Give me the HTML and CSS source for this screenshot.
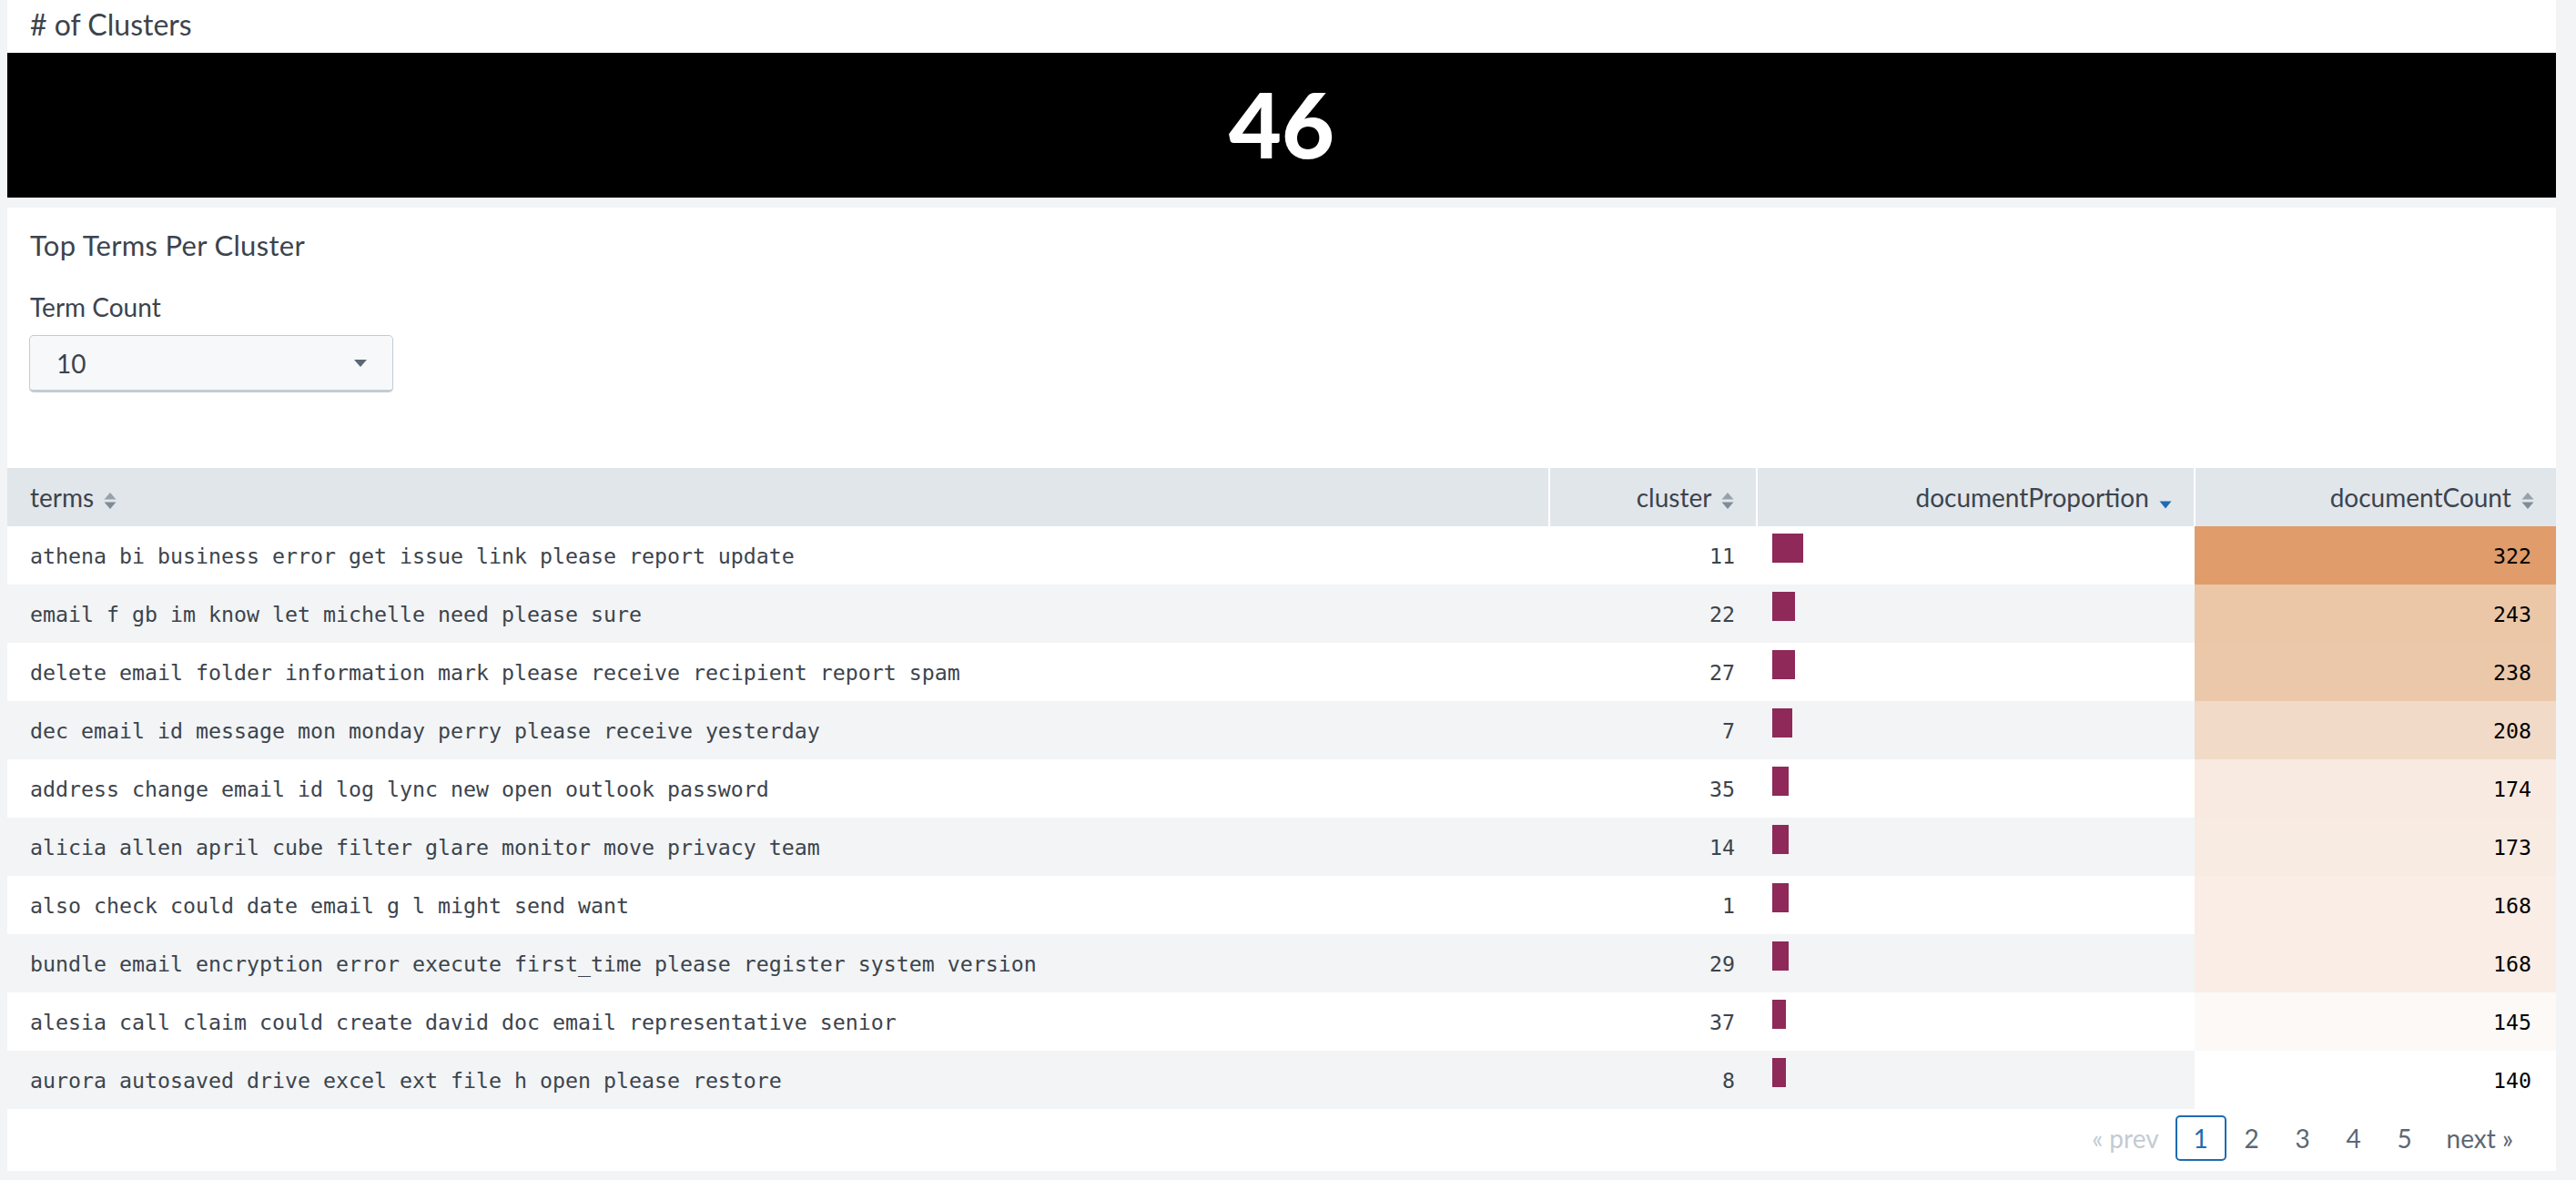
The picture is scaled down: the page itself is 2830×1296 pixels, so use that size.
FILE: index.html
```html
<!DOCTYPE html>
<html lang="en">
<head>
<meta charset="utf-8">
<title>Clusters</title>
<link rel="stylesheet" href="styles.css">
</head>
<body>
<div class="dash">
  <section class="panel">
    <h2 class="panel-title">
      # of Clusters
    </h2>
    <div class="single-value">46</div>
  </section>

  <section class="panel">
    <div class="panel-head">
      <h2 class="panel-title2">Top Terms Per Cluster</h2>
      <div class="input-label">Term Count</div>
      <div class="dropdown"><span class="dd-value">10</span><span class="caret"></span></div>
    </div>

    <table class="grid">
      <colgroup>
        <col class="c-terms"><col class="c-cluster"><col class="c-prop"><col class="c-count">
      </colgroup>
      <thead>
        <tr>
          <th class="left">terms <svg class="sort" width="14" height="18" viewBox="0 0 14 18"><path d="M7 0L13.5 7.5H0.5Z" fill="#97a1ab"/><path d="M7 18L13.5 10.5H0.5Z" fill="#818b96"/></svg></th>
          <th>cluster <svg class="sort" width="14" height="18" viewBox="0 0 14 18"><path d="M7 0L13.5 7.5H0.5Z" fill="#97a1ab"/><path d="M7 18L13.5 10.5H0.5Z" fill="#818b96"/></svg></th>
          <th>documentProportion <svg class="sort-active" width="14" height="9" viewBox="0 0 14 9"><path d="M0.5 0.5H13.5L7 8.5Z" fill="#1d6cb1"/></svg></th>
          <th>documentCount <svg class="sort" width="14" height="18" viewBox="0 0 14 18"><path d="M7 0L13.5 7.5H0.5Z" fill="#97a1ab"/><path d="M7 18L13.5 10.5H0.5Z" fill="#818b96"/></svg></th>
        </tr>
      </thead>
      <tbody>
        <tr><td class="terms">athena bi business error get issue link please report update</td><td class="num">11</td><td class="prop"><div class="bar" style="width:34px"></div></td><td class="count" style="background:#e09c6a">322</td></tr>
        <tr><td class="terms">email f gb im know let michelle need please sure</td><td class="num">22</td><td class="prop"><div class="bar" style="width:25px"></div></td><td class="count" style="background:#ebc7a8">243</td></tr>
        <tr><td class="terms">delete email folder information mark please receive recipient report spam</td><td class="num">27</td><td class="prop"><div class="bar" style="width:25px"></div></td><td class="count" style="background:#ebc8a9">238</td></tr>
        <tr><td class="terms">dec email id message mon monday perry please receive yesterday</td><td class="num">7</td><td class="prop"><div class="bar" style="width:22px"></div></td><td class="count" style="background:#f1dac7">208</td></tr>
        <tr><td class="terms">address change email id log lync new open outlook password</td><td class="num">35</td><td class="prop"><div class="bar" style="width:18px"></div></td><td class="count" style="background:#f8eae0">174</td></tr>
        <tr><td class="terms">alicia allen april cube filter glare monitor move privacy team</td><td class="num">14</td><td class="prop"><div class="bar" style="width:18px"></div></td><td class="count" style="background:#f8ebe1">173</td></tr>
        <tr><td class="terms">also check could date email g l might send want</td><td class="num">1</td><td class="prop"><div class="bar" style="width:18px"></div></td><td class="count" style="background:#f9ede5">168</td></tr>
        <tr><td class="terms">bundle email encryption error execute first_time please register system version</td><td class="num">29</td><td class="prop"><div class="bar" style="width:18px"></div></td><td class="count" style="background:#f9ede5">168</td></tr>
        <tr><td class="terms">alesia call claim could create david doc email representative senior</td><td class="num">37</td><td class="prop"><div class="bar" style="width:15px"></div></td><td class="count" style="background:#fcf9f7">145</td></tr>
        <tr><td class="terms">aurora autosaved drive excel ext file h open please restore</td><td class="num">8</td><td class="prop"><div class="bar" style="width:15px"></div></td><td class="count" style="background:#ffffff">140</td></tr>
      </tbody>
    </table>

    <nav class="pager">
      <span class="pg pg-disabled">« prev</span>
      <span class="pg pg-num pg-active">1</span>
      <span class="pg pg-num">2</span>
      <span class="pg pg-num">3</span>
      <span class="pg pg-num">4</span>
      <span class="pg pg-num">5</span>
      <span class="pg">next »</span>
    </nav>
  </section>
</div>
</body>
</html>
```

FILE: styles.css
```css
html, body {
  margin: 0;
  padding: 0;
  background: #f2f4f5;
}

body {
  font-family: Lato, "Open Sans", "Liberation Sans", sans-serif;
  color: #3c444d;
}

.dash {
  padding: 0 22px 0 8px;
  display: flex;
  flex-direction: column;
  gap: 11px;
}

.panel {
  background: #ffffff;
}

.panel-title {
  margin: 0;
  height: 58px;
  line-height: 54px;
  padding-left: 25px;
  font-size: 32px;
  font-weight: 400;
  color: #3c444d;
}

.single-value {
  height: 159px;
  background: #000000;
  color: #ffffff;
  display: flex;
  align-items: center;
  justify-content: center;
  font-size: 100px;
  font-weight: 900;
  line-height: 1;
  padding-bottom: 6px;
  box-sizing: border-box;
}

.panel-head {
  height: 286px;
  box-sizing: border-box;
  padding: 21px 25px 0;
}

.panel-title2 {
  margin: 0;
  font-size: 31px;
  font-weight: 400;
  line-height: 40px;
  letter-spacing: 0.3px;
}

.input-label {
  margin-top: 30px;
  font-size: 28px;
  line-height: 36px;
}

.dropdown {
  margin-top: 13px;
  margin-left: -1px;
  width: 400px;
  height: 63px;
  box-sizing: border-box;
  border: 1px solid #c3cbd4;
  border-bottom: 3px solid #c3cbd4;
  border-radius: 5px;
  background: #f7f8fa;
  display: flex;
  align-items: center;
  justify-content: space-between;
  padding: 0 28px 0 29px;
}

.dd-value {
  font-size: 28px;
  color: #3c444d;
}

.caret {
  width: 0;
  height: 0;
  border-left: 7px solid transparent;
  border-right: 7px solid transparent;
  border-top: 8px solid #5c6773;
}

.grid {
  width: 100%;
  border-collapse: collapse;
  table-layout: fixed;
}

.c-terms { width: 1694px; }
.c-cluster { width: 228px; }
.c-prop { width: 481px; }
.c-count { width: 397px; }

.grid th {
  height: 64px;
  padding: 0 24px;
  background: #e1e6eb;
  font-weight: 400;
  font-size: 28px;
  text-align: right;
  color: #3c444d;
  border-left: 2px solid #ffffff;
  white-space: nowrap;
}

.grid th.left {
  text-align: left;
  padding-left: 25px;
  border-left: none;
}

.sort {
  vertical-align: -2px;
  margin-left: 4px;
}

.sort-active {
  vertical-align: -2px;
  margin-left: 4px;
}

.grid td {
  height: 64px;
  padding: 0 24px;
  font-family: "DejaVu Sans Mono", "Liberation Mono", monospace;
  font-size: 23.25px;
  color: #3c444d;
  white-space: nowrap;
  box-sizing: border-box;
}

.grid tbody tr:nth-child(even) td {
  background: #f2f4f5;
}

.grid td.terms {
  padding-left: 25px;
}

.grid td.num {
  text-align: right;
}

.grid td.prop {
  vertical-align: top;
  padding: 8px 17px 0;
}

.bar {
  height: 32px;
  background: #8e2959;
}

.grid td.count {
  text-align: right;
  color: #000000;
  padding-right: 27px;
}

.pager {
  display: flex;
  justify-content: flex-end;
  align-items: center;
  padding: 7px 29px 11px 0;
}

.pg {
  height: 50px;
  box-sizing: border-box;
  line-height: 50px;
  padding: 0 18px;
  font-size: 28px;
  color: #5c6773;
}

.pg-num {
  width: 56px;
  padding: 0;
  text-align: center;
}

.pg-disabled {
  color: #c3cbd4;
}

.pg-active {
  border: 2px solid #1d6cb1;
  border-radius: 5px;
  line-height: 46px;
  color: #1d6cb1;
}
```
